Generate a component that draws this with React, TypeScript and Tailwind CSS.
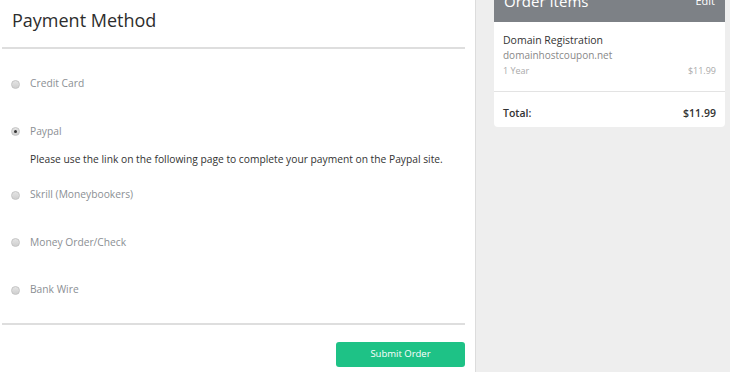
import React from "react"

const methods = [
  { id: "cc", label: "Credit Card" },
  { id: "paypal", label: "Paypal", note: "Please use the link on the following page to complete your payment on the Paypal site." },
  { id: "skrill", label: "Skrill (Moneybookers)" },
  { id: "mo", label: "Money Order/Check" },
  { id: "wire", label: "Bank Wire" },
]

function Radio({ checked }: { checked: boolean }) {
  return (
    <span className="w-[9px] h-[9px] rounded-full border border-[#c4c4c4] bg-gradient-to-b from-[#e4e4e4] to-[#cfcfcf] flex items-center justify-center shrink-0">
      {checked && <span className="w-[3px] h-[3px] rounded-full bg-[#333]" />}
    </span>
  )
}

export default function App() {
  return (
    <div className="flex h-[372px] w-[730px] overflow-hidden bg-white font-['Open_Sans',sans-serif]">
      <div className="w-[476px] shrink-0 border-r border-[#dcdcdc] pl-[2px] pr-[10px]">
        <h1 className="pl-[10px] pt-[7px] h-[47px] text-[18px] leading-[26px] text-[#2d2d2d]">Payment Method</h1>
        <div className="border-t-2 border-[#dedede]" />
        <div className="pt-[24px] h-[274px]">
          {methods.map((m) => (
            <div key={m.id} className="mb-[25.5px]">
              <label className="flex items-center gap-[10px] pl-[9px] h-[22px] text-[10.25px] text-[#8b8f94]">
                <Radio checked={m.id === "paypal"} />
                <span>{m.label}</span>
              </label>
              {m.note && (
                <p className="pl-[28px] mt-[8px] -mb-[8px] text-[10.25px] leading-[16px] text-[#333] whitespace-nowrap">{m.note}</p>
              )}
            </div>
          ))}
        </div>
        <div className="border-t-2 border-[#dedede]" />
        <div className="flex justify-end pt-[17px]">
          <button className="w-[129px] h-[25px] rounded-[3px] bg-[#1ec286] text-white text-[9.5px]">Submit Order</button>
        </div>
      </div>

      <div className="flex-1 bg-[#eeeeee] pl-[18px] pr-[5px]">
        <div className="bg-white rounded-b-[4px]">
          <div className="-mt-[19px] h-[41px] bg-[#7d8186] flex items-center justify-between px-[10px] text-white">
            <span className="text-[15px]">Order Items</span>
            <span className="text-[11px]">Edit</span>
          </div>
          <div className="px-[9px] pt-[11px] pb-[12px] border-b border-[#e3e3e3]">
            <div className="text-[10.5px] leading-[15px] text-[#333]">Domain Registration</div>
            <div className="text-[10px] leading-[15px] text-[#888]">domainhostcoupon.net</div>
            <div className="flex justify-between text-[9px] leading-[16px] text-[#aaa]">
              <span>1 Year</span>
              <span>$11.99</span>
            </div>
          </div>
          <div className="flex justify-between px-[9px] pt-[13px] pb-[6px] leading-[16px] text-[10.5px] font-semibold text-[#333]">
            <span>Total:</span>
            <span>$11.99</span>
          </div>
        </div>
      </div>
    </div>
  )
}
